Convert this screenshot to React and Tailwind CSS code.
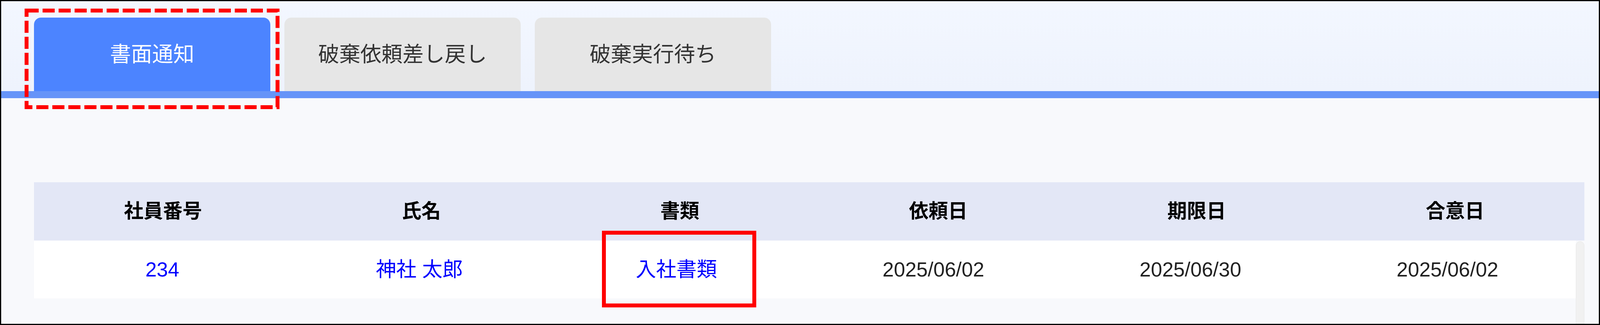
import React from "react";

const tabs = [
  { id: "notice", label: "書面通知" },
  { id: "returned", label: "破棄依頼差し戻し" },
  { id: "waiting", label: "破棄実行待ち" },
];

const columns = ["社員番号", "氏名", "書類", "依頼日", "期限日", "合意日"];

const rows = [
  {
    id: "234",
    name: "神社 太郎",
    doc: "入社書類",
    requested: "2025/06/02",
    due: "2025/06/30",
    agreed: "2025/06/02",
  },
];

const font = "font-['Liberation_Sans','Noto_Sans_CJK_JP',sans-serif]";

function Tab({ label, active }) {
  return (
    <div
      className={`w-[14.79vw] h-[188px] rounded-t-[18px] flex items-center justify-center text-[54px] ${
        active ? "bg-[#4c84ff] text-white" : "bg-[#e6e6e6] text-[#333333]"
      }`}
    >
      {label}
    </div>
  );
}

export default function App() {
  const active = "notice";

  return (
    <div
      className={`relative w-full h-[831px] border-[3px] border-black overflow-hidden bg-[#f8f9fc] ${font}`}
    >
      {/* tab strip */}
      <div className="bg-gradient-to-b from-[#f3f7ff] to-[#eef3fd] pt-[42px] pl-[2.04vw] flex gap-[0.86vw]">
        {tabs.map((t) => (
          <Tab key={t.id} label={t.label} active={t.id === active} />
        ))}
      </div>
      <div className="h-[18px] bg-[#6694f8]" />

      {/* table */}
      <div className="pt-[215px] pl-[2.04vw] pr-[0.91vw]">
        <div className="grid grid-cols-6 h-[149px] items-center text-center bg-[#e3e7f6] text-[50px] font-bold text-black">
          {columns.map((c) => (
            <div key={c}>{c}</div>
          ))}
        </div>
        <div className="flex h-[260px]">
          <div className="flex-1">
            {rows.map((r) => (
              <div
                key={r.id}
                className="grid grid-cols-6 h-[148px] items-center text-center bg-white text-[52px] text-[#222222]"
              >
                <a className="text-[#0000ff]">{r.id}</a>
                <a className="text-[#0000ff]">{r.name}</a>
                <a className="text-[#0000ff]">{r.doc}</a>
                <div>{r.requested}</div>
                <div>{r.due}</div>
                <div>{r.agreed}</div>
              </div>
            ))}
          </div>
          <div className="w-[0.52vw] mt-[2px] rounded-t-full bg-[#f1f1f1] border border-[#e8e8e8]" />
        </div>
      </div>

      {/* annotations */}
      <svg className="absolute left-[calc(1.475vw+5px)] top-[24px] w-[calc(15.93vw-10px)] h-[247px] overflow-visible">
        <rect
          x="0"
          y="0"
          width="100%"
          height="100%"
          fill="none"
          stroke="#ff0000"
          strokeWidth="10"
          strokeDasharray="31 10"
        />
      </svg>
      <div className="absolute left-[37.55vw] top-[587px] w-[9.64vw] h-[196px] border-[10px] border-[#ff0000]" />
    </div>
  );
}
